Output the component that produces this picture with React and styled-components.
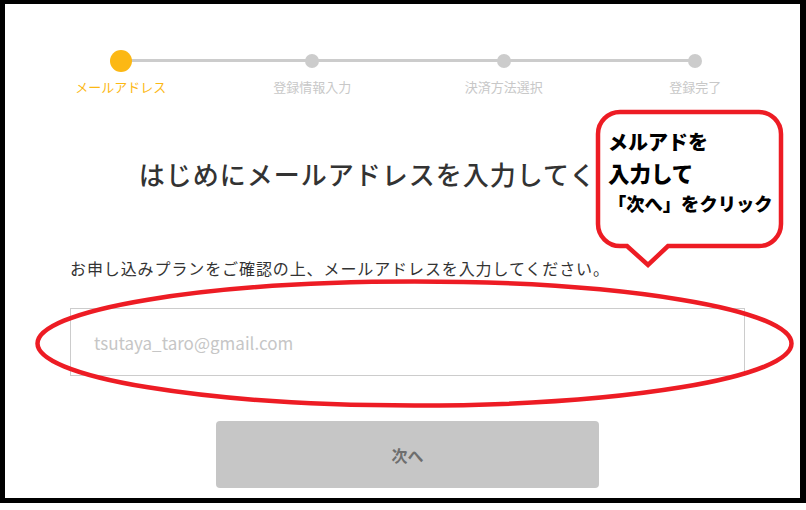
import React from 'react';
import styled, { createGlobalStyle } from 'styled-components';

const GlobalStyle = createGlobalStyle`
  html, body {
    margin: 0;
    padding: 0;
    background: #fff;
  }
  body {
    font-family: "Noto Sans CJK JP", "Noto Sans", sans-serif;
    color: #333;
  }
`;

const steps = ['メールアドレス', '登録情報入力', '決済方法選択', '登録完了'];

export default function App() {
  return (
    <>
      <GlobalStyle />
      <Frame>
        <Stepper>
          {steps.map((label, i) => (
            <Step key={label}>
              <DotSlot>
                <Dot $active={i === 0} />
              </DotSlot>
              <StepLabel $active={i === 0}>{label}</StepLabel>
            </Step>
          ))}
        </Stepper>

        <Title>はじめにメールアドレスを入力してください</Title>

        <Content>
          <Description>
            お申し込みプランをご確認の上、メールアドレスを入力してください。
          </Description>
          <EmailInput type="email" placeholder="tsutaya_taro@gmail.com" />
          <NextButton type="button">次へ</NextButton>
        </Content>

        <Annotation viewBox="0 0 806 503" aria-hidden="true">
          <ellipse cx="414.5" cy="343.5" rx="377" ry="62" fill="none" stroke="#ed1c24" strokeWidth="4.5" />
        </Annotation>

        <Callout>
          <svg width="192" height="162" viewBox="0 0 192 162" aria-hidden="true">
            <path
              d="M26 4 H165 A22 22 0 0 1 187 26 V116 A22 22 0 0 1 165 138 H74 L54 157 L33 138 H26 A22 22 0 0 1 4 116 V26 A22 22 0 0 1 26 4 Z"
              fill="#fff"
              stroke="#ed1c24"
              strokeWidth="4.5"
              strokeLinejoin="miter"
            />
          </svg>
          <CalloutText>
            <CalloutLine $size={20}>メルアドを</CalloutLine>
            <CalloutLine $size={21.5}>入力して</CalloutLine>
            <CalloutLine $size={18.3}>「次へ」をクリック</CalloutLine>
          </CalloutText>
        </Callout>
      </Frame>
    </>
  );
}

const Frame = styled.div`
  position: relative;
  box-sizing: border-box;
  width: 806px;
  height: 503px;
  border: 5px solid #000;
  border-top-width: 4px;
  border-right-width: 6px;
  background: #fff;
  overflow: hidden;
`;

const Stepper = styled.ol`
  position: relative;
  display: grid;
  grid-template-columns: repeat(4, 1fr);
  width: 766px;
  margin: 0 0 0 20px;
  padding: 46px 0 0;
  list-style: none;

  &::before {
    content: '';
    position: absolute;
    top: 55px;
    left: 96px;
    right: 96px;
    height: 3px;
    background: #cccccc;
  }
`;

const Step = styled.li`
  display: flex;
  flex-direction: column;
  align-items: center;
`;

const DotSlot = styled.div`
  position: relative;
  display: flex;
  align-items: center;
  justify-content: center;
  height: 22px;
`;

const Dot = styled.span`
  display: block;
  width: ${(p) => (p.$active ? '22px' : '14px')};
  height: ${(p) => (p.$active ? '22px' : '14px')};
  border-radius: 50%;
  background: ${(p) => (p.$active ? '#fcb814' : '#cccccc')};
`;

const StepLabel = styled.span`
  margin-top: 6px;
  font-size: 13px;
  line-height: 18px;
  color: ${(p) => (p.$active ? '#fcb814' : '#c8c8c8')};
`;

const Title = styled.h1`
  margin: 60px 0 0;
  padding-left: 11px;
  font-size: 26px;
  line-height: 36px;
  font-weight: 500;
  letter-spacing: 1px;
  color: #333;
  text-align: center;
  white-space: nowrap;
`;

const Content = styled.div`
  display: flex;
  flex-direction: column;
  width: 675px;
  margin-left: 65px;
`;

const Description = styled.p`
  margin: 64px 0 0;
  font-size: 16px;
  line-height: 24px;
  letter-spacing: 0.9px;
  color: #333;
  white-space: nowrap;
`;

const EmailInput = styled.input`
  box-sizing: border-box;
  width: 675px;
  height: 68px;
  margin-top: 28px;
  padding: 0 23px;
  border: 1px solid #cccccc;
  border-radius: 0;
  outline: none;
  font-family: "Noto Sans CJK JP", sans-serif;
  font-size: 17px;
  color: #333;

  &::placeholder {
    color: #c6c6c6;
  }
`;

const NextButton = styled.button`
  align-self: center;
  width: 383px;
  height: 67px;
  margin-top: 45px;
  border: none;
  border-radius: 4px;
  background: #c6c6c6;
  font-family: "Noto Sans CJK JP", sans-serif;
  font-size: 16px;
  font-weight: 700;
  color: #6e6e6e;
  cursor: default;
`;

const Annotation = styled.svg`
  position: absolute;
  top: -4px;
  left: -5px;
  width: 806px;
  height: 503px;
  pointer-events: none;
`;

const Callout = styled.div`
  position: absolute;
  top: 104px;
  left: 589px;
  width: 192px;
  height: 162px;

  svg {
    position: absolute;
    inset: 0;
  }
`;

const CalloutText = styled.div`
  position: relative;
  display: flex;
  flex-direction: column;
  padding: 18px 0 0 14px;
  color: #000;
  font-family: "Noto Sans CJK JP", sans-serif;
  font-weight: 900;
`;

const CalloutLine = styled.span`
  font-size: ${(p) => p.$size}px;
  line-height: 31px;
  white-space: nowrap;
`;
